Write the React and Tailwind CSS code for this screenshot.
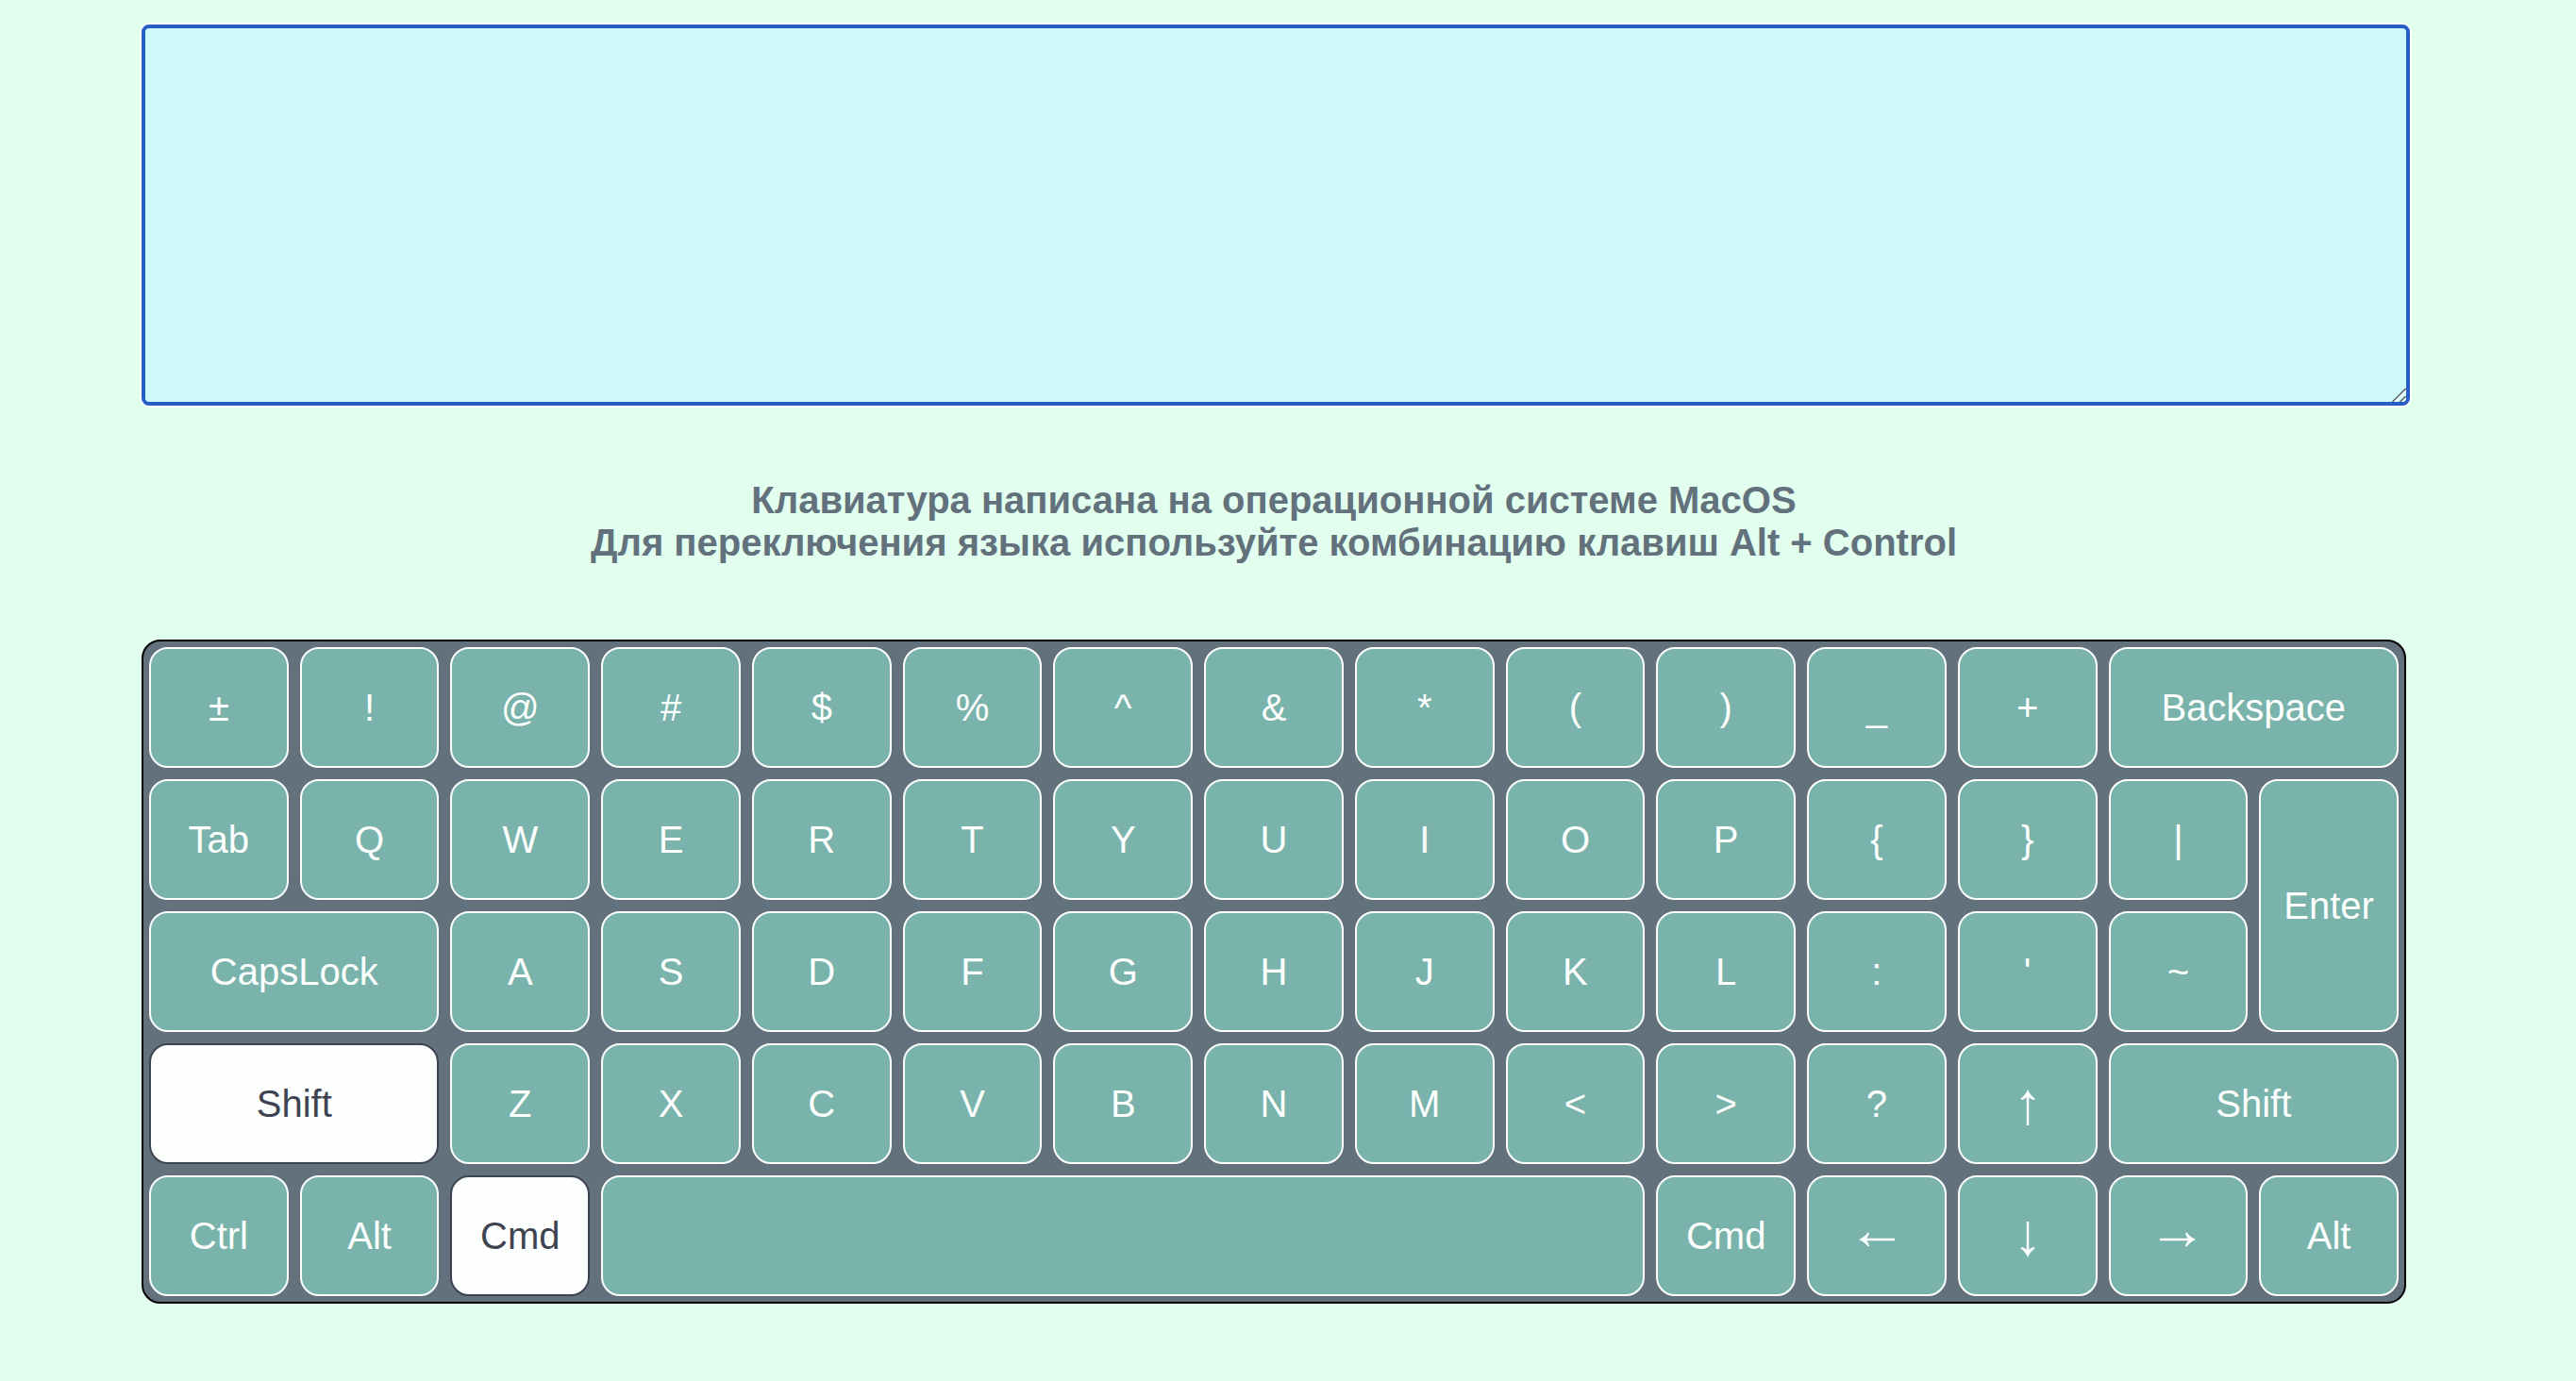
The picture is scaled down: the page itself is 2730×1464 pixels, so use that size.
import React from "react";

const arrows = {
  "Arrow left": "",
  "Arrow up": "rotate-90",
  "Arrow right": "rotate-180",
  "Arrow down": "-rotate-90",
};

const keys = [
  ["±"], ["!"], ["@"], ["#"], ["$"], ["%"], ["^"], ["&"], ["*"], ["("], [")"], ["_"], ["+"], ["Backspace", "col-span-2"],
  ["Tab"], ["Q"], ["W"], ["E"], ["R"], ["T"], ["Y"], ["U"], ["I"], ["O"], ["P"], ["{"], ["}"], ["|"], ["Enter", "row-span-2"],
  ["CapsLock", "col-span-2"], ["A"], ["S"], ["D"], ["F"], ["G"], ["H"], ["J"], ["K"], ["L"], [":"], ["'"], ["~"],
  ["Shift", "col-span-2", true], ["Z"], ["X"], ["C"], ["V"], ["B"], ["N"], ["M"], ["<"], [">"], ["?"], ["Arrow up"], ["Shift", "col-span-2"],
  ["Ctrl"], ["Alt"], ["Cmd", "", true], ["", "col-span-7"], ["Cmd"], ["Arrow left"], ["Arrow down"], ["Arrow right"], ["Alt"],
];

function Arrow({ turn }) {
  return (
    <svg className={`size-[38px] ${turn}`} viewBox="0 0 38 38" fill="currentColor" aria-hidden="true">
      <path d="M0 19C4 17.5 7.500 14.500 9.500 11.500L11 12C10.600 14.200 9.600 16.200 8.200 17.800H38V20.200H8.200C9.600 21.800 10.600 23.800 11 26L9.500 26.500C7.500 23.500 4 20.500 0 19Z" />
    </svg>
  );
}

function Key({ label, span = "", active = false }) {
  const tone = active
    ? "border-[#3d4351] bg-[#fdfffe] text-[#3d4351]"
    : "border-[#fdfffe] bg-[#79b3ab] text-[#fdfffe]";
  const isArrow = label in arrows;
  return (
    <button
      type="button"
      aria-label={label || "Space"}
      aria-pressed={active}
      className={`flex items-center justify-center rounded-[20px] border-2 ${tone} ${span} ${isArrow ? "pt-2" : ""}`}
    >
      {isArrow ? <Arrow turn={arrows[label]} /> : label}
    </button>
  );
}

export default function App() {
  return (
    <div className="min-h-screen bg-[#e1feef] pt-[26px] pr-[30px] pb-20 font-['Liberation_Sans',Arial,sans-serif] text-[40px] leading-[45px]">
      <main className="mx-auto flex w-8/9 flex-col">
        <div className="relative w-[calc(100%+4px)]">
          <textarea
            aria-label="Text"
            className="block h-[404px] w-full resize-none rounded-lg border-4 border-[#285dc8] bg-[#cdfaf9] p-1 text-[#3d4351] ring-2 ring-[#fdfffe] outline-none"
          />
          <svg
            className="pointer-events-none absolute right-1 bottom-1 h-4 w-4"
            viewBox="0 0 16 16"
            fill="none"
            strokeWidth="1.5"
            aria-hidden="true"
          >
            <path d="M3.500 16.500 16.500 3.500M11.500 16.500 16.500 11.500" stroke="#fdfffe" />
            <path d="M1.500 16 15 2.500H16M9.500 16 14.500 11H16" stroke="#566468" />
          </svg>
        </div>
        <p className="mt-[78px] text-center font-bold text-[#62717c]">
          Клавиатура написана на операционной системе MacOS
          <br />
          Для переключения языка используйте комбинацию клавиш Alt + Control
        </p>
        <div className="mt-20 grid auto-rows-[128px] grid-cols-15 gap-3 rounded-[20px] border-2 border-black bg-[#62717c] p-1.5">
          {keys.map(([label, span, active], i) => (
            <Key key={i} label={label} span={span} active={active} />
          ))}
        </div>
      </main>
    </div>
  );
}
